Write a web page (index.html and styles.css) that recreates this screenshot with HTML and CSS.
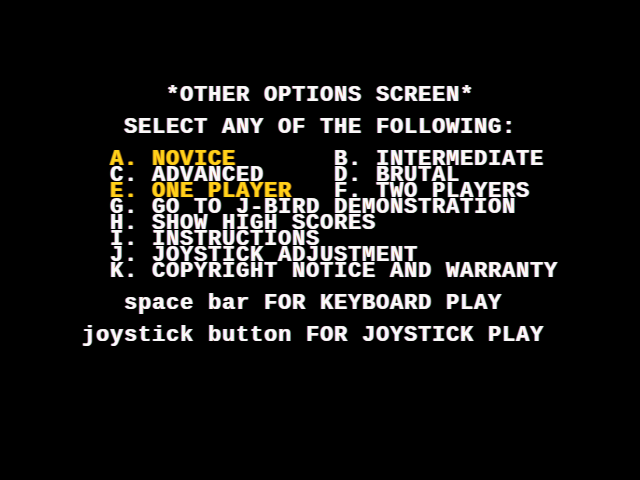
FILE: index.html
```html
<!DOCTYPE html>
<html lang="en">
<head>
  <meta charset="UTF-8">
  <title>Other Options Screen</title>
  <link rel="stylesheet" href="styles.css">
</head>
<body>

  <div class="screen">
    <div class="row">         *OTHER OPTIONS SCREEN*</div>
    <div class="row"> </div>
    <div class="row">      SELECT ANY OF THE FOLLOWING:</div>
    <div class="row"> </div>
    <div class="row">     <span class="pick">A. NOVICE</span>       B. INTERMEDIATE</div>
    <div class="row">     C. ADVANCED     D. BRUTAL</div>
    <div class="row">     <span class="pick">E. ONE PLAYER</span>   F. TWO PLAYERS</div>
    <div class="row">     G. GO TO J-BIRD DEMONSTRATION</div>
    <div class="row">     H. SHOW HIGH SCORES</div>
    <div class="row">     I. INSTRUCTIONS</div>
    <div class="row">     J. JOYSTICK ADJUSTMENT</div>
    <div class="row">     K. COPYRIGHT NOTICE AND WARRANTY</div>
    <div class="row"> </div>
    <div class="row">      space bar FOR KEYBOARD PLAY</div>
    <div class="row"> </div>
    <div class="row">   joystick button FOR JOYSTICK PLAY</div>
  </div>

</body>
</html>
```

FILE: styles.css
```css
body, html {
  height: 100%;
  margin: 0;
  background-color: #000;
}

/* 40 column text page, 14px per cell, 16px per line */
.screen {
  width: 560px;
  margin: 0 auto;
  padding-top: 88px;
  font-family: "Liberation Mono", "DejaVu Sans Mono", monospace;
  font-weight: bold;
  font-size: 22px;
  letter-spacing: 0.8px;
  color: #fafafa;
  text-shadow: -1px 0 rgba(226, 86, 30, 0.85), 1px 0 rgba(40, 168, 240, 0.85);
}

.row {
  height: 16px;
  line-height: 16px;
  white-space: pre;
}

.pick {
  color: #ffd21a;
  text-shadow: -1px 0 rgba(240, 110, 20, 0.9), 1px 0 rgba(120, 160, 20, 0.8);
}
```
